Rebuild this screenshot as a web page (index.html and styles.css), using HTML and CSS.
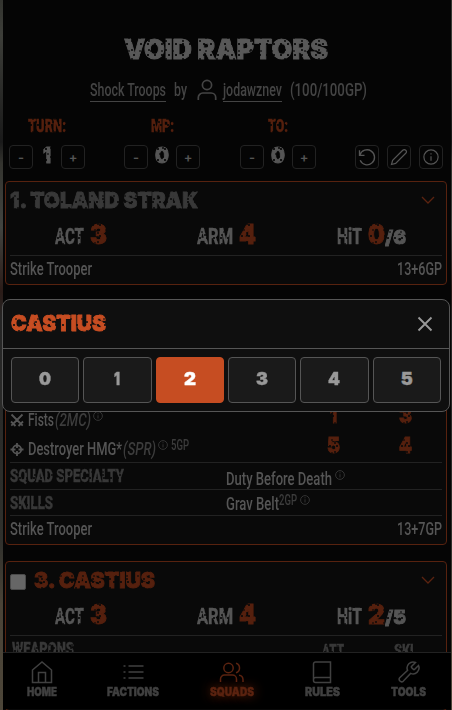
FILE: index.html
```
<!DOCTYPE html>
<html lang="en">
<head>
<meta charset="utf-8">
<title>Void Raptors</title>
<link rel="stylesheet" href="styles.css">
</head>
<body>
<div class="app">
<main class="panel">
  <h1 class="title"><span class="fit grunge" data-w="204">VOID RAPTORS</span></h1>
  <div class="byline">
    <a class="link"><span class="fit" data-w="76">Shock Troops</span></a>
    <span class="fit by" data-w="13">by</span>
    <svg class="user" width="20" height="22" viewBox="0 0 20 22"><circle cx="10" cy="6" r="4.6"/><path d="M1.3 21v-2.5a4.500 4.500 0 0 1 4.500-4.500h8.400a4.500 4.500 0 0 1 4.500 4.500V21"/></svg>
    <a class="link"><span class="fit" data-w="59">jodawznev</span></a>
    <span class="fit pts" data-w="77">(100/100GP)</span>
  </div>
  <div class="counters">
    <div class="counter"><div class="label"><span class="fit grunge" data-w="38">TURN:</span></div>
      <div class="step"><span class="btn">-</span><b class="num"><span class="fit grunge" data-w="8">1</span></b><span class="btn">+</span></div></div>
    <div class="counter"><div class="label"><span class="fit grunge" data-w="23">MP:</span></div>
      <div class="step"><span class="btn">-</span><b class="num"><span class="fit grunge" data-w="14">0</span></b><span class="btn">+</span></div></div>
    <div class="counter"><div class="label"><span class="fit grunge" data-w="20">TO:</span></div>
      <div class="step"><span class="btn">-</span><b class="num"><span class="fit grunge" data-w="14">0</span></b><span class="btn">+</span></div></div>
    <div class="tools">
      <span class="btn"><svg width="20" height="20" viewBox="0 0 24 24"><path d="M3 4v6h6M3.500 9.500a9 9 0 1 1 .3 6.500"/></svg></span>
      <span class="btn"><svg width="18" height="18" viewBox="0 0 24 24"><path d="M17 3a2.800 2.800 0 0 1 4 4L7.500 20.500 2 22l1.500-5.500z"/></svg></span>
      <span class="btn"><svg width="18" height="18" viewBox="0 0 24 24"><circle cx="12" cy="12" r="9.500"/><path d="M12 11v6M12 7v1.500"/></svg></span>
    </div>
  </div>

  <section class="card">
    <div class="name muted"><span class="fit grunge" data-w="188">1. TOLAND STRAK</span><svg class="chev" width="14" height="8" viewBox="0 0 14 8"><path d="M1 1l6 6 6-6"/></svg></div>
    <div class="stats">
      <div class="stat"><span class="fit key grunge" data-w="29">ACT</span><span class="fit val grunge" data-w="17">3</span></div>
      <div class="stat"><span class="fit key grunge" data-w="36">ARM</span><span class="fit val grunge" data-w="17">4</span></div>
      <div class="stat"><span class="fit key grunge" data-w="25">HiT</span><span class="fit val grunge" data-w="17">0</span><span class="fit max grunge" data-w="21">/6</span></div>
    </div>
    <div class="foot"><span class="fit" data-w="82">Strike Trooper</span><span class="fit" data-w="45">13+6GP</span></div>
  </section>

  <section class="card second">
    <div class="weapon">
      <svg class="wi" width="14" height="14" viewBox="0 0 14 14"><path d="M1.500 1.500l9 9M12.500 1.500l-9 9M1 8.500L5.500 13M13 8.500L8.500 13M1.300 12.700l2-2M12.700 12.700l-2-2"/></svg>
      <span class="fit" data-w="26">Fists</span><i class="fit type" data-w="36">(2MC)</i>
      <svg class="info" width="10" height="10" viewBox="0 0 10 10"><circle cx="5" cy="5" r="4.400"/><path d="M5 4.300v3.200M5 2.300v1"/></svg>
      <b class="att"><span class="fit grunge" data-w="7">1</span></b><b class="skl"><span class="fit grunge" data-w="13">3</span></b>
    </div>
    <div class="weapon low">
      <svg class="wi" width="14" height="14" viewBox="0 0 14 14"><circle cx="7" cy="7.500" r="4.200"/><path d="M7 1v5M7 9v5M.500 7.500h5M8.500 7.500h5"/></svg>
      <span class="fit" data-w="94">Destroyer HMG*</span><i class="fit type" data-w="33">(SPR)</i>
      <svg class="info" width="10" height="10" viewBox="0 0 10 10"><circle cx="5" cy="5" r="4.400"/><path d="M5 4.300v3.200M5 2.300v1"/></svg>
      <span class="fit sup cost" data-w="18">5GP</span>
      <b class="att"><span class="fit grunge" data-w="13">5</span></b><b class="skl"><span class="fit grunge" data-w="13">4</span></b>
    </div>
    <div class="trait spec"><span class="fit head grunge" data-w="114">SQUAD SPECIALTY</span><div class="desc"><span class="fit" data-w="106">Duty Before Death</span><svg class="info gap" width="10" height="10" viewBox="0 0 10 10"><circle cx="5" cy="5" r="4.400"/><path d="M5 4.300v3.200M5 2.300v1"/></svg></div></div>
    <div class="trait skills"><span class="fit head grunge" data-w="43">SKILLS</span><div class="desc"><span class="fit" data-w="53">Grav Belt</span><span class="fit sup" data-w="18">2GP</span><svg class="info gap" width="10" height="10" viewBox="0 0 10 10"><circle cx="5" cy="5" r="4.400"/><path d="M5 4.300v3.200M5 2.300v1"/></svg></div></div>
    <div class="foot"><span class="fit" data-w="82">Strike Trooper</span><span class="fit" data-w="45">13+7GP</span></div>
  </section>

  <section class="card third">
    <div class="name"><span class="check"></span><span class="fit grunge" data-w="121">3. CASTIUS</span><svg class="chev" width="14" height="8" viewBox="0 0 14 8"><path d="M1 1l6 6 6-6"/></svg></div>
    <div class="stats">
      <div class="stat"><span class="fit key grunge" data-w="29">ACT</span><span class="fit val grunge" data-w="17">3</span></div>
      <div class="stat"><span class="fit key grunge" data-w="36">ARM</span><span class="fit val grunge" data-w="17">4</span></div>
      <div class="stat"><span class="fit key grunge" data-w="25">HiT</span><span class="fit val grunge" data-w="17">2</span><span class="fit max grunge" data-w="21">/5</span></div>
    </div>
    <div class="weapon columns"><span class="fit head grunge" data-w="62">WEAPONS</span><span class="att"><span class="fit head grunge" data-w="22">ATT</span></span><span class="skl"><span class="fit head grunge" data-w="23">SKL</span></span></div>
  </section>
</main>

<div class="modal">
  <div class="modal-head"><span class="fit grunge" data-w="95">CASTIUS</span><svg class="close" width="16" height="16" viewBox="0 0 16 16"><path d="M1.500 1.500l13 13M14.500 1.500l-13 13"/></svg></div>
  <div class="choices">
    <span class="choice"><span class="fit" data-w="12">0</span></span>
    <span class="choice"><span class="fit" data-w="6">1</span></span>
    <span class="choice on"><span class="fit" data-w="12">2</span></span>
    <span class="choice"><span class="fit" data-w="12">3</span></span>
    <span class="choice"><span class="fit" data-w="12">4</span></span>
    <span class="choice"><span class="fit" data-w="12">5</span></span>
  </div>
</div>

<nav class="nav">
  <a><svg width="24" height="24" viewBox="0 0 24 24"><path d="M2.500 10L12 2l9.500 8v12.500h-19zM8.500 22V12.500h7V22"/></svg><span class="fit" data-w="30">HOME</span></a>
  <a><svg width="24" height="24" viewBox="0 0 24 24"><path d="M7.500 6h15M7.500 12h15M7.500 18h15M2.500 6h2M2.500 12h2M2.500 18h2"/></svg><span class="fit" data-w="52">FACTIONS</span></a>
  <a class="active"><svg width="26" height="24" viewBox="0 0 26 24"><circle cx="9.500" cy="8" r="4.700"/><path d="M1.500 22v-3a4 4 0 0 1 4-4h8a4 4 0 0 1 4 4v3M17 3.300a4.900 4.900 0 0 1 0 9.400M20 15.200a4.500 4.500 0 0 1 4 4.300V22"/></svg><span class="fit" data-w="44">SQUADS</span></a>
  <a><svg width="24" height="24" viewBox="0 0 24 24"><path d="M5.500 2H20.500V22.500H5.500a2 2 0 0 1-2-2V4a2 2 0 0 1 2-2zM3.500 19.500a2 2 0 0 1 2-2H20.500"/></svg><span class="fit" data-w="35">RULES</span></a>
  <a><svg width="24" height="24" viewBox="0 0 24 24"><path d="M14.700 6.300a1 1 0 0 0 0 1.400l1.600 1.600a1 1 0 0 0 1.400 0l3.800-3.800a6 6 0 0 1-7.900 7.900l-7.400 7.900a2.500 2.500 0 0 1-3.500-3.500l7.900-7.400a6 6 0 0 1 7.900-7.900z"/></svg><span class="fit" data-w="35">TOOLS</span></a>
</nav>
</div>
<script src="fit.js"></script>
</body>
</html>
```
FILE: styles.css
```
* { box-sizing: border-box; }
html, body { margin: 0; height: 710px; overflow: hidden; }
body { background: #050505; color: #555; font: 500 17.5px/26px Roboto, "Liberation Sans", sans-serif; }
.app {
  position: relative; width: 452px; height: 710px; overflow: hidden; padding: 0 1px 0 3px;
  background: linear-gradient(#33342f 0, #3d3e39 5%, #1a1a1a 20%, #34342f 23%, #424440 32%, #2b1c18 41%, #262626 45%, #30302c 76%, #4a4337 85%, #4d4639 100%);
}
.panel { height: 710px; overflow: hidden; background: #050505; }
svg { fill: none; stroke: currentColor; stroke-width: 1.6; flex: none; display: block; }
.fit { display: inline-block; white-space: nowrap; flex: none; }
.fit > span { display: inline-block; transform-origin: 0 50%; }
.grunge {
  -webkit-mask-image:
    radial-gradient(circle at 3px 4px, transparent .6px, #000 1.200px),
    radial-gradient(ellipse at 8px 3px, transparent .7px, #000 1.400px),
    radial-gradient(circle at 5px 9px, rgba(0,0,0,.2) .5px, #000 1.100px);
  -webkit-mask-size: 7px 11px, 17px 9px, 11px 13px;
  -webkit-mask-composite: source-in;
  mask-composite: intersect;
}
.title, .name, .num, .val, .max, .att, .skl, .modal-head, .choice, .nav { font-family: Inter, "Liberation Sans", sans-serif; font-weight: 900; }
.title, .name, .num, .val, .max, .att, .skl, .modal-head { -webkit-text-stroke: .9px currentColor; stroke-linejoin: miter; }
.choice, .nav, .key, .head, .label { -webkit-text-stroke: .4px currentColor; }

.title { margin: 0; padding-top: 29px; height: 69px; font-size: 27.500px; line-height: 40px; text-align: center; color: #585858; }
.title .fit { margin-right: 2px; }
.byline { display: flex; align-items: center; height: 41px; padding-left: 87px; color: #444; font-size: 18px; }
.link { height: 21px; line-height: 18px; border-bottom: 1px solid #444; margin-top: 3px; }
.by { margin-left: 8px; }
.user { margin: 0 6px 0 10px; stroke-width: 1.700; }
.pts { margin-left: 8px; }

.counters { display: grid; grid-template-columns: 115px 116px 115px auto; padding-left: 6px; align-items: end; }
.counter { width: 76px; }
.label { height: 31px; line-height: 31px; text-align: center; font-weight: 900; color: #55200e; font-size: 18px; margin-bottom: 4px; }
.step { display: flex; justify-content: space-between; }
.num { font-size: 22px; line-height: 20px; color: #555; }
.btn { display: flex; width: 24px; height: 24px; border: 1px solid #222; border-radius: 4px; align-items: center; justify-content: center; font: 600 13px/22px Inter, sans-serif; color: #555; }
.tools { display: flex; gap: 8px; }

.card { width: 442px; height: 104px; margin: 12px 0 0 2px; border: 1px solid #57220f; border-radius: 4px; background: #090909; padding: 0 4px; }
.name { display: flex; align-items: center; height: 36px; font-size: 22px; color: #55200e; }
.name.muted { color: #383838; }
.chev { color: #5b2310; margin: 0 7px 0 auto; stroke-width: 1.300; }
.stats { display: grid; grid-template-columns: 142px 140px auto; height: 28px; margin: 3px 0 6px 45px; }
.stat { display: flex; align-items: baseline; height: 28px; line-height: 28px; }
.key { font-weight: 800; font-size: 22px; margin-right: 6px; }
.val { font-size: 27px; color: #55200e; }
.max { font-size: 18.500px; }
.foot { display: flex; justify-content: space-between; height: 29px; border-top: 1px solid #222; }

.second { height: 244px; margin-top: 16px; display: flex; flex-direction: column; justify-content: flex-end; }
.weapon { display: flex; align-items: center; height: 28px; position: relative; }
.low { padding-top: 2px; }
.wi { margin-right: 4px; stroke-width: 1.800; }
.type { color: #3c3c3c; margin-left: 1px; }
.info { color: #393939; stroke-width: .9; margin: -8px 0 0 2px; }
.sup { font-size: 14px; color: #3c3c3c; margin-top: -9px; }
.cost { margin-left: 3px; }
.att, .skl { position: absolute; top: -5px; width: 30px; text-align: center; color: #55200e; font-size: 22px; line-height: 28px; }
.low .att, .low .skl { top: -3px; }
.att { left: 308px; }
.skl { left: 380px; }
.trait { display: grid; grid-template-columns: 216px auto; border-top: 1px solid #222; }
.spec { height: 27px; }
.skills { height: 26px; }
.trait .head { line-height: 25px; }
.desc { display: flex; align-items: center; padding-top: 3px; }
.skills .desc { padding-top: 1px; }
.gap { margin-left: 3px; }
.head { font-weight: 900; color: #383838; font-size: 18px; }

.third { height: 150px; margin-top: 16px; }
.check { width: 16px; height: 16px; margin-right: 8px; margin-top: 3px; border-radius: 2px; background: #666; border: 1px solid #4a4a4a; }
.columns { border-top: 1px solid #222; padding: 0 0 2px 2px; }
.columns .att, .columns .skl { top: -1px; -webkit-text-stroke: .4px currentColor; }
.columns .head { font-family: Roboto, sans-serif; }

.modal { position: absolute; left: 2px; top: 299px; width: 448px; height: 113px; border: 1px solid #565656; border-radius: 8px; background: #0f0f0f; }
.modal-head { display: flex; align-items: center; justify-content: space-between; height: 49px; padding: 0 16px 3px 8px; border-bottom: 1px solid #565656; font-size: 22px; color: #c64d22; }
.close { color: #999; stroke-width: 1.900; margin-top: 3px; }
.choices { display: grid; grid-template-columns: repeat(6, 1fr); gap: 4px; padding: 8px; }
.choice { height: 46px; border: 1px solid #555; border-radius: 4px; background: #1a1a1a; color: #999; font-size: 18px; line-height: 42px; text-align: center; }
.choice.on { background: #c64d22; border-color: #c64d22; color: #fff; }

.nav { position: absolute; left: 3px; top: 652px; width: 448px; height: 57px; display: grid; grid-template-columns: 77px 106px 92px 88px 85px; background: #000; border-top: 1px solid #222; color: #404040; font-size: 11.500px; line-height: 14px; }
.nav a { display: flex; flex-direction: column; align-items: center; padding-top: 7px; gap: 1px; }
.nav svg { stroke-width: 1.500; }
.active { color: #5b2310; }
.active .fit { text-shadow: 0 0 12px rgba(198,77,34,.6); }
```
FILE: fit.js
```
// Condenses or widens each label to its intended width.
document.querySelectorAll('.fit').forEach(function (el) {
  var inner = document.createElement('span');
  inner.textContent = el.textContent;
  el.textContent = '';
  el.appendChild(inner);
  var w = Number(el.dataset.w);
  var natural = inner.getBoundingClientRect().width;
  el.style.width = w + 'px';
  inner.style.transform = 'scaleX(' + w / natural + ')';
});
```
